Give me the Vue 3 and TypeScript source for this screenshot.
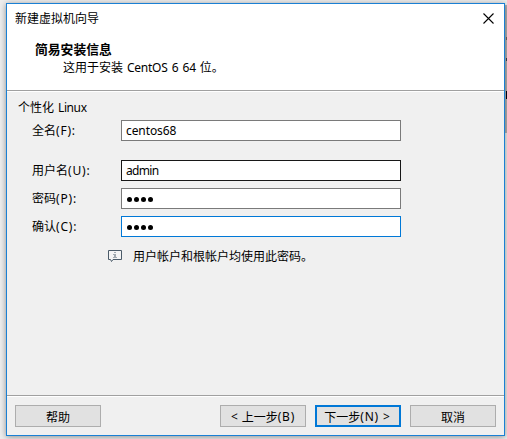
<script setup lang="ts">
import { ref } from 'vue'

interface Field {
  label: string
  key: string
  value: string
  kind: 'text' | 'secret'
  state: string
}

const fields = ref<Field[]>([
  { label: '全名', key: '(F):', value: 'centos68', kind: 'text', state: 'spaced' },
  { label: '用户名', key: '(U):', value: 'admin', kind: 'text', state: 'hover' },
  { label: '密码', key: '(P):', value: '••••', kind: 'secret', state: '' },
  { label: '确认', key: '(C):', value: '••••', kind: 'secret', state: 'focus' },
])
</script>

<template>
  <div class="desktop">
    <div class="behind"><i class="mark one"></i><i class="mark two"></i><i class="mark three"></i></div>
    <main class="dialog">
      <header class="head">
        <div class="titlebar">
          <span class="caption">新建虚拟机向导</span>
          <svg class="close" width="11" height="11" viewBox="0 0 11 11"><path d="M.5.5l10 10M10.5.5l-10 10" stroke="#000" stroke-width="1.1" /></svg>
        </div>
        <h1>简易安装信息</h1>
        <p>这用于安装<span class="lat os">CentOS 6 64</span>位。</p>
      </header>
      <section class="body">
        <h2>个性化<span class="lat linux">Linux</span></h2>
        <div v-for="f in fields" :key="f.key" class="row" :class="f.state">
          <label>{{ f.label }}<span class="lat key">{{ f.key }}</span></label>
          <div class="box lat">
            <span v-if="f.kind === 'text'">{{ f.value }}</span>
            <span v-else class="dots"><i v-for="n in f.value.length" :key="n"></i></span>
          </div>
        </div>
        <div class="note">
          <svg width="15" height="13" viewBox="0 0 15 13">
            <path d="M.5.5h13v9H5L3.500 11.500L2.500 9.500H.5z" fill="#f4f4f4" stroke="#4b5b69" />
            <path d="M6 2h2v1H6zM6 4h2v3h1v1H5V7h1V5H5V4z" fill="#a1a9b0" />
          </svg>
          <span>用户帐户和根帐户均使用此密码。</span>
        </div>
      </section>
      <footer class="foot">
        <button class="help">帮助</button>
        <button><span class="lat lt">&lt;</span>上一步<span class="lat key">(B)</span></button>
        <button class="primary">下一步<span class="lat key">(N)</span><span class="lat gt">&gt;</span></button>
        <button>取消</button>
      </footer>
    </main>
  </div>
</template>

<style>
body { overflow: hidden; }
</style>

<style scoped>
* { box-sizing: border-box; }
.desktop {
  position: relative;
  width: 507px;
  height: 439px;
  padding: 3px 2px 3px 6px;
  overflow: hidden;
  background: #ededed;
  font: 400 12px/16px "Noto Sans CJK SC", sans-serif;
  color: #000;
}
.lat { font-family: "Noto Sans", "Noto Sans CJK SC", sans-serif; letter-spacing: -0.1px; }
.key { letter-spacing: 0.8px; }
.behind {
  position: absolute;
  left: 505px;
  top: 5px;
  width: 2px;
  height: 128px;
  background: #b0b0b0;
}
.mark { position: absolute; left: 1px; width: 1px; height: 3px; background: #666; }
.one { top: 32px; }
.two { top: 53px; background: #345; }
.three { top: 86px; height: 8px; background: #001; }
.dialog {
  position: relative;
  display: flex;
  flex-direction: column;
  width: 499px;
  height: 433px;
  border: 1px solid #1a80d4;
  background: #f0f0f0;
  box-shadow: 0 1px 6px rgba(0, 0, 0, 0.4);
}
.head {
  height: 88px;
  background: #fff;
  border-bottom: 1px solid #fff;
  box-shadow: inset 0 -1px #a0a0a0;
}
.titlebar {
  display: flex;
  justify-content: space-between;
  height: 36px;
  padding: 6px 10px 0 8px;
}
.close { margin-top: 3px; }
h1 { margin: 0 0 0 28px; font-size: 12.8px; line-height: 18px; font-weight: 700; height: 18px; }
.head p { margin: 1px 0 0 56px; }
.os { margin: 0 4px; letter-spacing: -0.25px; word-spacing: 1.3px; }
.body { height: 303px; }
h2 { margin: 0; padding: 7px 0 0 11px; font-size: 12px; line-height: 16px; font-weight: 400; height: 28px; }
.linux { margin-left: 4px; letter-spacing: -0.4px; }
.row { display: flex; height: 21px; margin: 0 0 7px 25px; }
.row.spaced { margin-bottom: 19px; }
label { width: 89px; line-height: 20px; }
.box {
  display: flex;
  align-items: center;
  width: 280px;
  height: 21px;
  padding-left: 4px;
  line-height: 19px;
  background: #fff;
  border: 1px solid #7a7a7a;
}
.hover .box { border-color: #171717; letter-spacing: -0.7px; }
.focus .box { border-color: #0078d7; }
.dots { display: flex; gap: 2px; padding: 2px 0 0 1px; }
.dots i { width: 5px; height: 5px; border-radius: 50%; background: #000; }
.note { display: flex; margin: 8px 0 0 101px; }
.note svg { margin-top: 5px; }
.note span { margin: 3px 0 0 10px; }
.foot {
  display: flex;
  gap: 10px;
  height: 39px;
  padding: 9px 0 0 8px;
  border-top: 1px solid #a0a0a0;
  box-shadow: inset 0 1px #fff;
}
button {
  display: flex;
  justify-content: center;
  align-items: center;
  width: 86px;
  height: 22px;
  padding: 2px 0 0;
  flex: none;
  background: #e1e1e1;
  border: 1px solid #adadad;
  font: inherit;
  color: #000;
}
.foot button + button { margin-left: -1px; }
.foot .help + button { margin-left: 109px; }
.foot .primary { padding-right: 2px; border: 2px solid #0078d7; }
.lt { margin-right: 4px; }
.gt { margin-left: 4px; }
</style>
